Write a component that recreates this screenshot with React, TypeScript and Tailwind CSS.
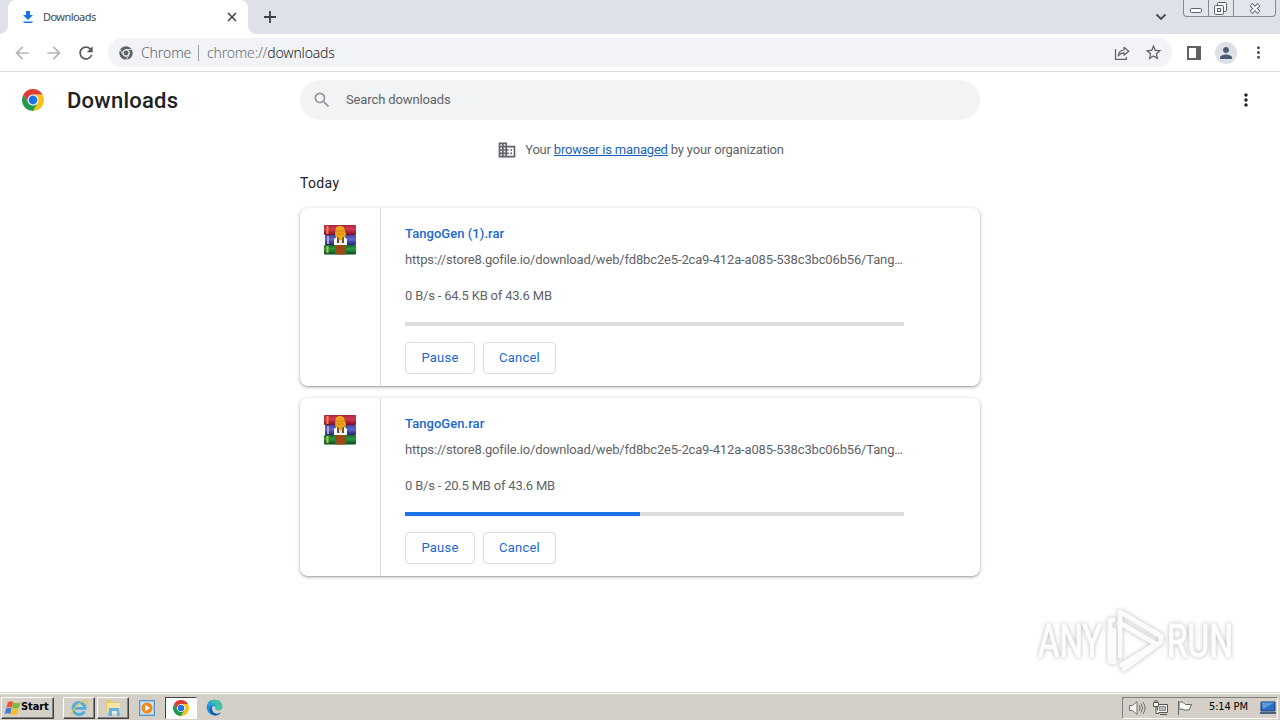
import { ReactNode } from "react";
import clsx from "clsx";
import { MdArrowBack, MdArrowForward, MdRefresh, MdStarOutline, MdSearch, MdMoreVert, MdDomain, MdPerson } from "react-icons/md";

// ── Types ────────────────────────────────────────────────────────────────────

interface Download {
  name: string;
  url: string;
  status: string;
  progress: number;
}

const DOWNLOADS: Download[] = [
  {
    name: "TangoGen (1).rar",
    url: "https://store8.gofile.io/download/web/fd8bc2e5-2ca9-412a-a085-538c3bc06b56/Tang…",
    status: "0 B/s - 64.5 KB of 43.6 MB",
    progress: 0,
  },
  {
    name: "TangoGen.rar",
    url: "https://store8.gofile.io/download/web/fd8bc2e5-2ca9-412a-a085-538c3bc06b56/Tang…",
    status: "0 B/s - 20.5 MB of 43.6 MB",
    progress: 47,
  },
];

// ── Icons ────────────────────────────────────────────────────────────────────

const CHROME_ARC = "M24 12h20.78A24 24 0 0 0 3.22 12l10.39 18A12 12 0 0 1 24 12z";

function ChromeLogo({ size }: { size: number }) {
  return (
    <svg width={size} height={size} viewBox="0 0 48 48">
      <circle cx="24" cy="24" r="13" fill="#fff" />
      <path d={CHROME_ARC} fill="#fbc116" transform="rotate(120 24 24)" />
      <path d={CHROME_ARC} fill="#229a4b" transform="rotate(240 24 24)" />
      <path d={CHROME_ARC} fill="#dd3b30" />
      <circle cx="24" cy="24" r="9.6" fill="#1a73e8" />
    </svg>
  );
}

function ChromeMono() {
  return (
    <svg width="14" height="14" viewBox="0 0 48 48">
      <g fill="#5f6368" stroke="#f1f3f4" strokeWidth="2">
        <path d={CHROME_ARC} />
        <path d={CHROME_ARC} transform="rotate(120 24 24)" />
        <path d={CHROME_ARC} transform="rotate(240 24 24)" />
      </g>
      <circle cx="24" cy="24" r="8.5" fill="#5f6368" />
    </svg>
  );
}

function RarIcon() {
  return (
    <svg width="32" height="32" viewBox="0 0 32 32">
      <defs>
        <linearGradient id="red" x1="0" y1="0" x2="0" y2="1">
          <stop offset="0" stopColor="#a3243a" />
          <stop offset=".4" stopColor="#d63a55" />
          <stop offset="1" stopColor="#7d0f20" />
        </linearGradient>
        <linearGradient id="blue" x1="0" y1="0" x2="0" y2="1">
          <stop offset="0" stopColor="#3c3f9c" />
          <stop offset=".4" stopColor="#6169cf" />
          <stop offset="1" stopColor="#25256f" />
        </linearGradient>
        <linearGradient id="green" x1="0" y1="0" x2="0" y2="1">
          <stop offset="0" stopColor="#14662c" />
          <stop offset=".4" stopColor="#2f9a45" />
          <stop offset="1" stopColor="#08471b" />
        </linearGradient>
      </defs>
      <rect x="0" y="1" width="32" height="10" rx="1" fill="url(#red)" />
      <rect x="1" y="11" width="31" height="10" rx="1" fill="url(#blue)" />
      <rect x="0" y="21" width="32" height="9.500" rx="1" fill="url(#green)" />
      <path d="M3.500 2v8" stroke="#ee8a3c" strokeWidth="2" />
      <path d="M4 12v8" stroke="#b9a5b5" strokeWidth="2" />
      <path d="M3.500 22v7" stroke="#b4cc3a" strokeWidth="2" />
      <path d="M11 21h11v9.500H11z" fill="#9c4a16" />
      <path d="M12 3.500Q16 0 20 3.500L22 10l-1 4h-9l-1-4z" fill="#eba51c" />
      <path d="M12 7h9M13 10h7" stroke="#cf8213" />
      <path d="M10 15l3-2h7l3 2v6H10z" fill="#fff" />
      <path d="M13 13h7v6h-7z" fill="#7a4a27" />
      <path d="M14 12h5l-1 4h-3z" fill="#eba51c" />
      <path d="M15 16h3v3h-3z" fill="#ddd" />
    </svg>
  );
}

function ShareIcon() {
  return (
    <svg width="16" height="16" viewBox="0 0 16 16" fill="none" stroke="#5f6368" strokeWidth="1.200">
      <path d="M1.500 4v10.300h10.800v-2.300" />
      <path d="M4.200 11Q4.800 5.300 10 5V2.300L14.800 6.200 10 10.200V7.800Q6.500 7.800 4.200 11z" strokeLinejoin="round" />
    </svg>
  );
}

// ── Browser chrome ───────────────────────────────────────────────────────────

function TabStrip() {
  return (
    <div className="flex h-[34px] bg-[#dee1e8] pl-2">
      <div className="relative flex h-full w-60 items-center rounded-t-lg bg-white pl-3.5 pr-2.5">
        {/* curved feet of the active tab */}
        <span className="absolute -left-2 bottom-0 size-2 bg-[radial-gradient(circle_at_0_0,#dee1e8_7.5px,#fff_8px)]" />
        <span className="absolute -right-2 bottom-0 size-2 bg-[radial-gradient(circle_at_100%_0,#dee1e8_7.5px,#fff_8px)]" />
        <svg width="12" height="14" viewBox="0 0 12 14" fill="#1a73e8">
          <path d="M4 1h4v4h3L6 10 1 5h3zM1.500 11.500h9V13h-9z" />
        </svg>
        <span className="ml-[9px] font-['Noto_Sans',sans-serif] text-[11px] leading-4 tracking-[-0.55px] text-[#45474a]">Downloads</span>
        <svg className="ml-auto" width="12" height="12" viewBox="0 0 12 12" stroke="#45494d" strokeWidth="1.700">
          <path d="M2 2l8 8M10 2l-8 8" />
        </svg>
      </div>
      <svg className="ml-[15px] mt-[10px]" width="14" height="14" viewBox="0 0 14 14" stroke="#3c4043" strokeWidth="1.800">
        <path d="M1 7h12M7 1v12" />
      </svg>
      <svg className="ml-auto mr-4 mt-[12px]" width="12" height="10" viewBox="0 0 12 10" fill="none" stroke="#45494d" strokeWidth="1.800">
        <path d="M1.500 2.500L6 7l4.500-4.500" />
      </svg>
      <div className="mr-1 flex h-[17px] w-[93px] rounded-b-[4px] border border-t-0 border-[#868a92] bg-[#e2e5eb]">
        <div className="flex w-[25px] items-end justify-center border-r border-[#868a92] pb-[3px]">
          <svg width="12" height="5" viewBox="0 0 12 5" fill="#fff" stroke="#5b5f68">
            <rect x=".5" y=".5" width="11" height="4" rx="1" />
          </svg>
        </div>
        <div className="flex w-[25px] items-center justify-center border-r border-[#868a92] pr-px">
          <svg width="13" height="13" viewBox="0 0 13 13" fill="#f7f7f8" stroke="#5b5f68">
            <rect x="3.500" y=".5" width="9" height="9" rx="1" />
            <rect x=".5" y="3.500" width="9" height="9" rx="1" />
            <rect x="3.500" y="6.500" width="3" height="3" />
          </svg>
        </div>
        <div className="flex flex-1 items-center justify-center">
          <svg width="12" height="11" viewBox="0 0 12 11">
            <path d="M2 1.500l8 8M10 1.500l-8 8" stroke="#5b5f68" strokeWidth="4" />
            <path d="M2.500 2l7 7M9.500 2l-7 7" stroke="#fff" strokeWidth="2.400" />
          </svg>
        </div>
      </div>
    </div>
  );
}

function Toolbar() {
  return (
    <div className="flex h-[38px] items-center border-b border-[#d9dbde] bg-white pl-3">
      <MdArrowBack size={20} className="text-[#b4b6b9]" />
      <MdArrowForward size={20} className="ml-3 text-[#b4b6b9]" />
      <MdRefresh size={20} className="ml-3 text-[#54575b]" />
      <div className="ml-3 flex h-[29px] w-[1064px] items-center rounded-full bg-[#f1f3f6] pl-[11px] pr-[9px] font-['Noto_Sans',sans-serif] text-sm font-light">
        <ChromeMono />
        <span className="ml-2 w-[50px] whitespace-nowrap tracking-[-0.1px] text-[#5f6368]">Chrome</span>
        <span className="ml-[7px] h-4 w-px bg-[#9b9fa4]" />
        <span className="ml-2 whitespace-nowrap tracking-[-0.18px] text-[#6b6f74]">
          chrome://<span className="text-[#202124]">downloads</span>
        </span>
        <span className="ml-auto">
          <ShareIcon />
        </span>
        <MdStarOutline size={19} className="ml-[14px] text-[#5f6368]" />
      </div>
      <svg className="ml-[14px]" width="16" height="16" viewBox="0 0 16 16">
        <rect x="2" y="2" width="12" height="12" fill="none" stroke="#5f6368" strokeWidth="2" />
        <path d="M10 1h5v14h-5z" fill="#5f6368" />
      </svg>
      <span className="ml-[13px] flex size-[22px] items-center justify-center rounded-full bg-[#dde1e6]">
        <MdPerson size={18} className="text-[#4c5a75]" />
      </span>
      <MdMoreVert size={19} className="ml-3 text-[#55585c]" />
    </div>
  );
}

// ── Downloads page ───────────────────────────────────────────────────────────

function CardButton({ children, className }: { children: ReactNode; className: string }) {
  return (
    <button className={clsx("h-8 rounded-[4px] border border-[#dadce0] text-[13px] tracking-[0.25px] text-[#1a67d2]", className)}>
      {children}
    </button>
  );
}

function DownloadCard({ item }: { item: Download }) {
  return (
    <div className="flex h-[178px] rounded-lg bg-white shadow-[0_1px_2px_rgba(60,64,67,0.4),0_1px_4px_1px_rgba(60,64,67,0.15)]">
      <div className="flex w-[81px] justify-center border-r border-[#d8d9dc] pt-4">
        <RarIcon />
      </div>
      <div className="w-[523px] pl-6 pt-4">
        <p className="text-[13px] font-medium leading-5 tracking-[0.05px] text-[#1a67d2]">{item.name}</p>
        <p className="mt-1.5 whitespace-nowrap text-[13px] leading-5 tracking-[-0.155px] text-[#5f6368]">{item.url}</p>
        <p className="mt-4 text-[13px] leading-5 tracking-[-0.2px] text-[#5f6368]">{item.status}</p>
        <div className="mt-4 h-1 bg-[#dcdcdc]">
          <div className="h-full bg-[#1a73e8]" style={{ width: `${item.progress}%` }} />
        </div>
        <div className="mt-4 flex gap-2">
          <CardButton className="w-[70px]">Pause</CardButton>
          <CardButton className="w-[73px]">Cancel</CardButton>
        </div>
      </div>
    </div>
  );
}

function Watermark() {
  return (
    <svg
      className="absolute bottom-[18px] right-[10px] drop-shadow-[0_0_2px_rgba(0,0,0,0.28)]"
      width="234"
      height="70"
      viewBox="0 0 234 70"
    >
      <g fill="#fdfdfd" stroke="#fdfdfd" strokeWidth="1.200" fontFamily="Roboto, sans-serif" fontSize="46">
        <text x="2" y="53" textLength="64" lengthAdjust="spacingAndGlyphs">ANY</text>
        <text x="131" y="53" textLength="66" lengthAdjust="spacingAndGlyphs">RUN</text>
      </g>
      <g fill="none" stroke="#fbfbfb" strokeWidth="5" strokeLinejoin="round" strokeLinecap="round">
        <path d="M84 52V8l41 24" />
        <path d="M84 19l36 21-34 21" />
        <path d="M74 57V16h3M74 57l4 1V26" />
        <path d="M125 32v6L88 65" />
      </g>
    </svg>
  );
}

function DownloadsPage() {
  return (
    <main className="relative h-[620px] bg-white">
      <header className="flex h-14 items-center pl-[22px]">
        <ChromeLogo size={22} />
        <h1 className="ml-[23px] w-[233px] pt-0.5 text-[22px] font-medium leading-7 tracking-[0.25px] text-[#202124]">Downloads</h1>
        <div className="flex h-10 w-[680px] items-center rounded-full bg-[#f1f3f4] pl-3">
          <MdSearch size={20} className="text-[#919599]" />
          <span className="ml-3.5 text-[13px] tracking-[-0.12px] text-[#5f6368]">Search downloads</span>
        </div>
        <MdMoreVert size={20} className="ml-auto mr-6 text-[#202124]" />
      </header>
      <div className="mx-auto w-[680px]">
        <div className="flex h-[44px] items-center justify-center gap-2 pl-[1px] text-[13px] tracking-[-0.19px] text-[#5f6368]">
          <MdDomain size={20} />
          <span>
            Your <a className="text-[#1a62b8] underline">browser is managed</a> by your organization
          </span>
        </div>
        <h2 className="h-9 text-sm leading-[22px] tracking-[0.35px] text-[#202124]">Today</h2>
        <div className="flex flex-col gap-3">
          {DOWNLOADS.map((d) => (
            <DownloadCard key={d.name} item={d} />
          ))}
        </div>
      </div>
      <Watermark />
    </main>
  );
}

// ── Taskbar ──────────────────────────────────────────────────────────────────

const RAISED = "border border-t-white border-l-white border-b-[#404040] border-r-[#404040] shadow-[inset_-1px_-1px_0_#808080]";

function WindowsFlag() {
  return (
    <svg className="shrink-0" width="16" height="16" viewBox="0 0 16 16">
      <path d="M3 2Q5.500.5 8.200 2L6.800 7.800Q4 6.300 1.300 7.800z" fill="#e8592b" />
      <path d="M8.600 2.300Q11.500 4 15.500 2.300L14 8Q10.500 9.500 7.200 8z" fill="#7fb83c" />
      <path d="M1.100 8.400Q3.700 7 6.600 8.400L5.200 14Q2.500 12.500-.2 14z" fill="#3f7fd0" />
      <path d="M7 8.700Q10 10.300 13.800 8.700l-1.400 5.500Q8.800 15.800 5.600 14.200z" fill="#f4bd2a" />
    </svg>
  );
}

function IeIcon() {
  return (
    <svg width="18" height="18" viewBox="0 0 18 18" fill="none">
      <path d="M14.300 12.300A6 6 0 1 1 15 9.300H5" stroke="#4aaee4" strokeWidth="2.800" />
      <path d="M2.500 16.500Q0 14.500 5.500 8 12 1 16 1.500q2 1 0 4.500" stroke="#e9c040" strokeWidth="1.300" />
    </svg>
  );
}

function FolderIcon() {
  return (
    <svg width="18" height="18" viewBox="0 0 18 18">
      <path d="M2 1h5l1 2h8v11H2z" fill="#e2c86c" />
      <path d="M3 4h13v10H3z" fill="#f5e6a6" />
      <path d="M5 9h10l1 8h-3v-5H8v5H4z" fill="#68b2dc" />
      <path d="M8 12h5v3H8z" fill="#dcecf3" />
    </svg>
  );
}

function PlayerIcon() {
  return (
    <svg width="16" height="16" viewBox="0 0 16 16">
      <rect x=".5" y=".5" width="15" height="15" fill="#9fc6e4" stroke="#5b95c5" />
      <rect x="2" y="2" width="12" height="12" fill="#cfe3f1" />
      <circle cx="8" cy="8" r="5.500" fill="#f0861c" />
      <path d="M6.200 4.800v6.400L11.200 8z" fill="#fff" />
    </svg>
  );
}

function EdgeIcon() {
  return (
    <svg width="17" height="17" viewBox="0 0 18 18">
      <path d="M.7 8.500Q1.500.7 9 .7q7.500.3 8.300 7.300 0 4-4.500 4-3 0-2.500-2 .3-1.500-1-2.500Q6 6.500 6.500 11q1 4.500 5.500 4.500 2 0 4-1.500-2.500 3.500-7 3.500-7.500-.5-8.300-9z" fill="#1a8ed8" />
      <path d="M4 3.500Q6 .7 9 .7q7.500.3 8.300 7.300 0 4-4.500 4-3 0-2.500-2 .5-4-3-5.500Q5.500 4 4 3.500z" fill="#3fc4a6" />
      <path d="M.7 8.500Q1 5 4 3.500q4-1 6 2.500 1 2 .5 3Q9 6 5 6.300 1.500 6.500.7 8.500z" fill="#2ba8dc" />
      <path d="M8 7.500Q5.500 8 6 11.500q1 4 6 4.300 2 0 4-1.800-2.500 3.500-7 3.500-4.500-1.500-5-5.500Q4.500 8 8 7.500z" fill="#1458a8" />
    </svg>
  );
}

function Tray() {
  return (
    <div className="ml-auto mr-[2px] flex h-[22px] w-[156px] items-center border border-b-white border-l-[#808080] border-r-white border-t-[#808080] pl-[5px]">
      <svg width="18" height="16" viewBox="0 0 18 16" fill="#f6f6f4" stroke="#707070">
        <path d="M1.500 5.500h3L9 1.500v13L4.500 10.500h-3z" />
        <path d="M11 5q2 3 0 6M13 3.500q3 4.500 0 9M15 2q4 6 0 12" fill="none" />
      </svg>
      <svg className="ml-[6px]" width="17" height="16" viewBox="0 0 17 16" fill="#f4f4f2" stroke="#555">
        <path d="M5.500 4.500h10v8h-10zM8 14.500h7" />
        <path d="M7.500 6.500h6v4h-6z" fill="#b9b9b5" stroke="#888" />
        <path d="M1.500 2.500h5v4h-5zM3 0v2M5 0v2M4 7v6.500h3" />
      </svg>
      <svg className="ml-[7px]" width="17" height="16" viewBox="0 0 17 16" fill="#fafaf8" stroke="#686868">
        <path d="M2.500 1v14M3 2.500q3-2 5.500 1l1 1h6L13 10H8q-2-2-5-.500z" />
      </svg>
      <span className="ml-[15px] w-[41px] whitespace-nowrap pl-px font-['DejaVu_Sans_Condensed','DejaVu_Sans',sans-serif] text-[11px] tracking-[-0.15px] text-black">
        5:14 PM
      </span>
      <svg className="ml-[11px]" width="16" height="14" viewBox="0 0 16 14">
        <path d="M1 1h14v9H1z" fill="#2c6dc4" stroke="#1c3f78" />
        <path d="M1.500 1.500h13L3 8z" fill="#5c9be0" />
        <path d="M0 11h16v2H0z" fill="#4a5f7c" />
      </svg>
    </div>
  );
}

function Taskbar() {
  return (
    <footer className="flex h-7 items-center border-t border-[#d4d0c8] bg-[#d4d0c8] pt-[2px] shadow-[inset_0_1px_0_#fff]">
      <button className={clsx("ml-px flex h-[22px] w-[53px] items-center pl-[3px]", RAISED)}>
        <WindowsFlag />
        <span className="font-['DejaVu_Sans_Condensed','DejaVu_Sans',sans-serif] text-[11px] font-bold tracking-[-0.1px] text-black">Start</span>
      </button>
      <button className={clsx("ml-[9px] flex h-[22px] w-8 items-center justify-center", RAISED)}>
        <IeIcon />
      </button>
      <button className={clsx("ml-[2px] flex h-[22px] w-8 items-center justify-center", RAISED)}>
        <FolderIcon />
      </button>
      <span className="ml-[10px]">
        <PlayerIcon />
      </span>
      <button className="ml-[10px] flex h-[22px] w-8 items-center justify-center border border-b-white border-l-[#404040] border-r-white border-t-[#404040] bg-[#fafafa]">
        <ChromeLogo size={16} />
      </button>
      <span className="ml-[9px]">
        <EdgeIcon />
      </span>
      <Tray />
    </footer>
  );
}

export default function App() {
  return (
    <div className="h-[720px] w-[1280px] overflow-hidden bg-white font-[Roboto,sans-serif]">
      <TabStrip />
      <Toolbar />
      <DownloadsPage />
      <Taskbar />
    </div>
  );
}
